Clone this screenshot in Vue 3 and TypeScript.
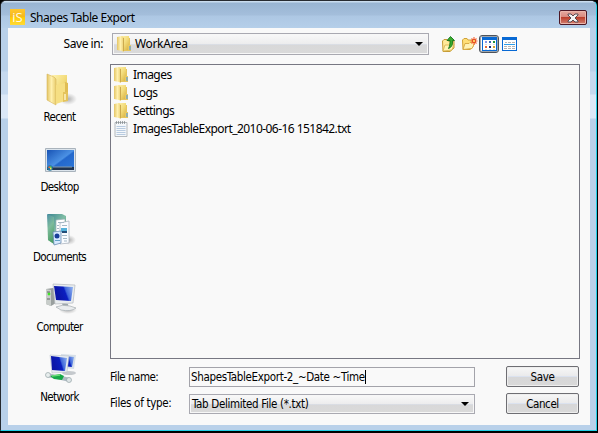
<script setup lang="ts">
interface Entry { name: string; kind: 'folder' | 'text' }
interface Place { name: string; icon: string }

const entries: Entry[] = [
  { name: 'Images', kind: 'folder' },
  { name: 'Logs', kind: 'folder' },
  { name: 'Settings', kind: 'folder' },
  { name: 'ImagesTableExport_2010-06-16 151842.txt', kind: 'text' },
]
const places: Place[] = [
  { name: 'Recent', icon: 'recent' },
  { name: 'Desktop', icon: 'desktop' },
  { name: 'Documents', icon: 'documents' },
  { name: 'Computer', icon: 'computer' },
  { name: 'Network', icon: 'network' },
]
</script>

<template>
  <div class="window">
    <svg class="defs" width="0" height="0">
      <defs>
        <linearGradient id="gold" x1="0" x2="1" y1="0" y2="1">
          <stop offset="0" stop-color="#fff3b0" /><stop offset=".5" stop-color="#f3dc7c" /><stop offset="1" stop-color="#d9b23e" />
        </linearGradient>
        <linearGradient id="goldflap" x1="0" x2="1">
          <stop offset="0" stop-color="#e4c566" /><stop offset=".5" stop-color="#fff0ae" /><stop offset="1" stop-color="#e8cc6c" />
        </linearGradient>
        <linearGradient id="sky" x1="0" x2="1" y1="0" y2="1">
          <stop offset="0" stop-color="#1853b4" /><stop offset=".5" stop-color="#4b91e4" /><stop offset=".55" stop-color="#2468cc" /><stop offset="1" stop-color="#2c77d8" />
        </linearGradient>
        <linearGradient id="screen" x1="0" x2="1" y1="0" y2="-.3">
          <stop offset="0" stop-color="#0c16a8" /><stop offset=".42" stop-color="#0b1fc0" /><stop offset=".5" stop-color="#3f66da" /><stop offset="1" stop-color="#a9c9f6" />
        </linearGradient>
        <linearGradient id="teal" x1="0" x2="1" y1="0" y2="1">
          <stop offset="0" stop-color="#3e8793" /><stop offset=".5" stop-color="#80bda5" /><stop offset="1" stop-color="#3d9f70" />
        </linearGradient>
        <linearGradient id="tealflap" x1="0" x2=".3" y1="0" y2="1">
          <stop offset="0" stop-color="#4d8fa6" /><stop offset=".5" stop-color="#7dbb9c" /><stop offset="1" stop-color="#4f9f68" />
        </linearGradient>
        <radialGradient id="shade">
          <stop offset="0" stop-color="#888" stop-opacity=".65" /><stop offset="1" stop-color="#999" stop-opacity="0" />
        </radialGradient>
        <symbol id="folder" viewBox="0 0 14 16">
          <path d="M5 2h8v8h1v5H5z" fill="#e6c65f" />
          <path d="M4 0h8v14H4z" fill="url(#gold)" />
          <path d="M0 1 5 0l2 2v14l-2-1-5-1z" fill="url(#goldflap)" />
          <path d="M6.500 2v13" stroke="#c8a548" stroke-width=".9" />
          <path d="M11 9h3v5h-3z" fill="#e8c862" /><path d="M13 10v4" stroke="#599ee0" stroke-width="1.200" />
        </symbol>
      </defs>
    </svg>

    <header class="titlebar">
      <span class="logo">iS</span>
      <span class="title">Shapes Table Export</span>
      <button class="close" aria-label="Close">
        <svg width="12" height="10" viewBox="0 0 12 10">
          <path d="M1 1h3l2 2 2-2h3v1L8 5l3 3v1H8L6 7 4 9H1V8l3-3-3-3z" fill="#f4f4f4" stroke="#594b52" stroke-width="1" />
        </svg>
      </button>
    </header>

    <main class="body">
      <div class="toolbar">
        <label class="savein">Save in:</label>
        <div class="combo location">
          <svg class="folder" width="14" height="16"><use href="#folder" /></svg>
          <span class="segoe workarea">WorkArea</span>
          <i class="arrow"></i>
        </div>
        <div class="tools">
          <svg width="14" height="16" viewBox="0 0 14 16">
            <path d="M.5 5 2 3.500h3L6 5h6v7l-4 3.500H1z" fill="#ffe99a" stroke="#c59b35" />
            <path d="m1 15 2-6h4l1-1h4l-2 6z" fill="#fff4b5" stroke="#d9b34b" stroke-width=".8" />
            <path d="m8.500.5 4 4h-2c.4 4-.5 6.500-4 8 1.500-3 1.500-5 1.500-8H5z" fill="#39ad2e" stroke="#16731a" stroke-width=".9" />
          </svg>
          <svg class="newfolder" width="16" height="14" viewBox="0 0 16 14">
            <path d="M.5 3 2 1.500h3L6 3h5v7l-3 2.500H1z" fill="#ffdf78" stroke="#d0a238" />
            <path d="m1 12.500 2-6h4l1-1h5l-3 6z" fill="#fff2b5" stroke="#d5a640" stroke-width=".9" />
            <path d="M12 0v8M8.500 4h7M9.500 1.500l5 5M14.500 1.500l-5 5" stroke="#f36332" stroke-width="1.100" /><circle cx="12" cy="4" r="1.600" fill="#ffda65" stroke="#e84a24" />
          </svg>
          <span class="selected">
            <svg width="15" height="14" viewBox="0 0 15 14" shape-rendering="crispEdges">
              <path d="M0 0h15v14H0z" fill="#0869d4" /><path d="M1 3h13v10H1z" fill="#fff" />
              <path d="M3 4h2v2H3z" fill="#8c96e4" /><path d="M7 4h2v2H7z" fill="#3469b6" /><path d="M11 4h2v2h-2z" fill="#239238" />
              <path d="M3 9h2v2H3z" fill="#e66a36" /><path d="M7 9h2v2H7z" fill="#102b80" /><path d="M11 9h2v2h-2z" fill="#d7a32a" />
              <path d="M3 7.500h2M7 7.500h2M11 7.500h2M3 12.500h2M7 12.500h2M11 12.500h2" stroke="#ddd" />
            </svg>
          </span>
          <svg class="details" width="15" height="14" viewBox="0 0 15 14" shape-rendering="crispEdges">
            <path d="M0 0h15v14H0z" fill="#0869d4" /><path d="M1 3h13v10H1z" fill="#fff" />
            <path d="M3 5.500h2M6 5.500h3M10 5.500h3M2 9.500h3M6 9.500h3M10 9.500h3M2 11.500h3M6 11.500h3M10 11.500h3" stroke="#b4b4b4" />
            <path d="M2 7.500h11" stroke="#2d9ce9" />
          </svg>
        </div>
      </div>

      <div class="columns">
        <nav class="places">
          <div v-for="p in places" :key="p.name" class="place">
            <svg width="34" height="34" viewBox="0 0 34 34">
              <g v-if="p.icon === 'recent'">
                <ellipse cx="24" cy="26" rx="9" ry="6" fill="url(#shade)" />
                <path d="M8 2h15v26H8z" fill="url(#gold)" /><path d="m21 9 3 1v9l-2 9-2-1z" fill="#e0bd54" />
                <path d="M3 1 10 4l2 2v26l-9-5z" fill="url(#goldflap)" stroke="#d7b65b" stroke-width=".6" />
                <path d="M12 12 21 10v18l-9 3z" fill="#f6df83" /><path d="M19 19h5v9l-5 1z" fill="#e4c35b" /><path d="M21 21v6" stroke="#fff8d5" stroke-width="1.300" />
              </g>
              <g v-else-if="p.icon === 'desktop'">
                <path d="M1.500 5.500h30v23h-30z" fill="#dbe4ec" stroke="#a9b3bc" /><path d="M3 7h27v20H3z" fill="url(#sky)" />
                <path d="M3 24h27v3H3z" fill="#203451" /><path d="M9 24h19" stroke="#859aaa" />
                <circle cx="6" cy="25" r="2.800" fill="#26779d" /><path d="M4.500 23.500h1.500v1.500H4.500z" fill="#ee643a" /><path d="M6 23.500h1.500v1.500H6z" fill="#7dd148" /><path d="M6 25h1.500v1.500H6z" fill="#ffe050" />
              </g>
              <g v-else-if="p.icon === 'documents'">
                <ellipse cx="25" cy="27" rx="7" ry="5" fill="url(#shade)" />
                <path d="M4 1h14l4 2v25l-12 3-6-4z" fill="url(#teal)" />
                <path d="m12 7 9-1v23l-9-2z" fill="#fff" stroke="#95adb3" stroke-width=".7" /><path d="m16 10 9-2v22l-9 1z" fill="#fafcff" stroke="#a5afba" stroke-width=".7" />
                <path d="M14 9.500h6M13 12.500h2M13 15.500h2M18 12.500h5M18 22.500h5M19 25.500h4M20 28h3" stroke="#a5b9c6" /><path d="M17 15h6v4h-6z" fill="#54b2da" /><path d="M18 18h5v2h-5z" fill="#244e79" />
                <path d="m3 1 7 3v27l-6-4z" fill="url(#tealflap)" /><path d="m9 19 8-1v12l-7 2z" fill="#d8eaff" stroke="#698db1" stroke-width=".8" /><circle cx="13" cy="23" r="2.500" fill="#183e99" /><path d="M11 27.500h5" stroke="#64a2c9" />
              </g>
              <g v-else-if="p.icon === 'computer'">
                <ellipse cx="24" cy="27" rx="9" ry="4" fill="url(#shade)" />
                <path d="m2 6 7-1 3 2v13l-5 3-5-2z" fill="#999f9e" /><path d="m2 6 5 1v16l-5-2z" fill="#c8cdca" /><circle cx="5" cy="11" r="1.400" fill="#3fe526" /><path d="M3 9h3M3 16h3" stroke="#626664" />
                <path d="m18 20 6 1 1 5-6-1z" fill="#9ca7ad" /><path d="M12 24q6-3 14-1l6 2q-5 4-15 2z" fill="#e9ecee" stroke="#a6adb2" stroke-width=".7" />
                <path d="m9 1 22 1-2 18-18 1z" fill="#e9edef" stroke="#b3b8bd" stroke-width=".7" /><path d="m10 3 19 1-2 14-15-1z" fill="url(#screen)" />
              </g>
              <g v-else>
                <path d="m17 1 15 1-2 14-12-1z" fill="#d6dfe8" /><path d="m19 3 11 1-2 10-10-1z" fill="url(#screen)" />
                <ellipse cx="25" cy="20" rx="7" ry="2" fill="#c5c9cd" />
                <path d="m6 2 19 1-2 16-15 1z" fill="#e6ebf0" stroke="#b0b8c0" stroke-width=".5" /><path d="m7 3 16 2-2 13-13-1z" fill="url(#screen)" />
                <path d="m3 22 10 2 13 3" fill="none" stroke="#aebac2" stroke-width="4" /><path d="m6 23 10-2 4 2-2 4-8-1z" fill="#16a847" /><path d="m8 23 8-1" stroke="#67dc77" stroke-width="1.500" />
                <circle cx="4" cy="22" r="2.500" fill="#e8eeee" stroke="#96a5a8" stroke-width=".7" /><circle cx="25" cy="27" r="2.500" fill="#dfe6e8" stroke="#96a5a8" stroke-width=".7" />
              </g>
            </svg>
            <span class="tahoma">{{ p.name }}</span>
          </div>
        </nav>

        <div class="right">
          <div class="list">
            <div v-for="e in entries" :key="e.name" class="entry">
              <svg v-if="e.kind === 'folder'" width="14" height="16"><use href="#folder" /></svg>
              <svg v-else width="14" height="16" viewBox="0 0 14 16">
                <path d="M1 1.500h12v14H1z" fill="#f4f7fa" stroke="#a4a9ad" stroke-width=".8" />
                <path d="M2.500 5.500h9M2.500 7.500h9M2.500 9.500h9M2.500 11.500h9M2.500 13.500h9" stroke="#b8cbe0" />
                <path d="M2.500 0v3M4.500 0v3M6.500 0v3M8.500 0v3M10.500 0v3" stroke="#7d8588" stroke-width=".7" />
              </svg>
              <span :class="['segoe', e.kind]">{{ e.name }}</span>
            </div>
          </div>
          <div class="fields tahoma">
            <label class="fn">File name:</label>
            <div class="input"><span class="value">ShapesTableExport-2_~Date ~Time</span><i class="caret"></i></div>
            <button class="btn"><span class="save">Save</span></button>
            <label class="ft">Files of type:</label>
            <div class="combo type"><span class="filter">Tab Delimited File (*.txt)</span><i class="arrow"></i></div>
            <button class="btn"><span class="cancel">Cancel</span></button>
          </div>
        </div>
      </div>
    </main>
  </div>
</template>

<style>
body { margin: 0; background: #000; overflow: hidden; }
</style>

<style scoped>
* { box-sizing: border-box; }
.window { width: 597px; height: 431px; padding: 0 6px 5px 7px; border: 1px solid #262a30; border-right-color: #23cfe6; border-bottom-color: #23cfe6; border-radius: 6px 6px 0 0; background: linear-gradient(#b9d1ea 0 70px, #c5d9ef 71px 93px, #dbe8f7 94px 117px, #b9d1ea 118px); font: 12px/16px "Noto Sans", sans-serif; color: #000; white-space: nowrap; }
.defs { position: absolute; }
.titlebar { display: flex; align-items: flex-start; height: 27px; margin: 0 -6px 0 -7px; padding: 8px 9px 0 9px; border-radius: 5px 5px 0 0; background: linear-gradient(#c9dcee 0 1px, #98b4d2 2px, #a4bedb 14px, #adc7e3 15px, #b5cfe9); }
.logo { width: 15px; height: 16px; background: linear-gradient(#ffc62e, #f5b91c 48%, #ffc900 50%, #ffda38); color: #fffbe8; font: 13px/16px "Open Sans", sans-serif; text-align: center; }
.title { margin: 1px 0 0 5px; letter-spacing: -.47px; }
.close { display: flex; align-items: center; justify-content: center; margin: 1px 0 0 auto; width: 28px; height: 15px; padding: 0; border: 1px solid #4c1725; border-radius: 2px; background: linear-gradient(#e6aaa0, #d98a7f 45%, #bc402d 50%, #d18072); box-shadow: inset 0 0 0 1px #eab5ab; }
.body { display: flex; flex-direction: column; height: 397px; background: #f9f9f9; }
.toolbar { display: flex; height: 36px; padding-top: 5px; }
.savein { width: 95px; margin: 3px 1px 0 0; text-align: right; letter-spacing: -.45px; }
.combo { display: flex; align-items: center; border: 1px solid #a9a9b1; background: linear-gradient(#f9f9f9, #ededee 48%, #dce3f0 50%, #d8d8d9 55%, #dadada); box-shadow: inset 0 0 0 1px #f7f7f7; }
.location { width: 317px; height: 22px; margin-left: 8px; padding: 0 5px 0 4px; }
.workarea { margin-left: 4px; }
.location .workarea { letter-spacing: -.35px; }
.arrow { margin-left: auto; border: 4px solid transparent; border-top-color: #000; border-bottom: 0; }
.tools { display: flex; align-items: flex-start; margin-left: 13px; padding-top: 3px; }
.newfolder { margin: 1px 0 0 6px; }
.selected { display: flex; align-items: center; justify-content: center; width: 20px; height: 18px; margin: -1px 0 0 1px; border: 1px solid #4d535b; border-radius: 3px; box-shadow: inset 0 0 0 1px #a0a5ab; }
.details { margin: 1px 0 0 3px; }
.columns { display: flex; height: 361px; }
.places { width: 103px; padding-top: 9px; }
.place { display: flex; flex-direction: column; align-items: center; height: 70px; }
.place svg { margin-left: 2px; }
.place span { margin-top: 2px; letter-spacing: -.65px; }
.tahoma { font-family: "DejaVu Sans Condensed", "DejaVu Sans", sans-serif; font-stretch: condensed; font-size: 11.5px; letter-spacing: -.5px; }
.right { width: 469px; }
.list { height: 295px; margin-left: -1px; padding: 1px 3px; border: 1px solid #777782; background: #f9f9f9; }
.entry { display: flex; align-items: center; height: 18px; }
.entry span { margin-left: 5px; }
.segoe { letter-spacing: -.55px; }
.fields { display: grid; grid-template-columns: 78px 286px 105px; grid-template-rows: 21px 20px; row-gap: 6px; padding-top: 7px; }
.fields .btn { margin-left: 31px; }
.fields label { margin: 3px 0 0 -1px; }
.fields .ft { margin-top: 2px; letter-spacing: -.3px; }
.input { display: flex; align-items: center; height: 20px; margin-top: 1px; padding-left: 1px; border: 1px solid #a3a3aa; }
.value { letter-spacing: -.34px; }
.caret { width: 1px; height: 14px; background: #000; }
.type { height: 20px; margin-top: 1px; padding: 0 5px 0 2px; }
.filter { letter-spacing: -.34px; }
.btn { width: 73px; height: 21px; padding: 0; border: 1px solid #6e6e73; border-radius: 2px; background: linear-gradient(#f7f7f7, #ebebec 45%, #dbe2ef 50%, #d7d7d8 55%, #d9d9d9); box-shadow: inset 0 0 0 1px #eee; font: inherit; font-stretch: condensed; line-height: 18px; letter-spacing: -.4px; }
</style>
